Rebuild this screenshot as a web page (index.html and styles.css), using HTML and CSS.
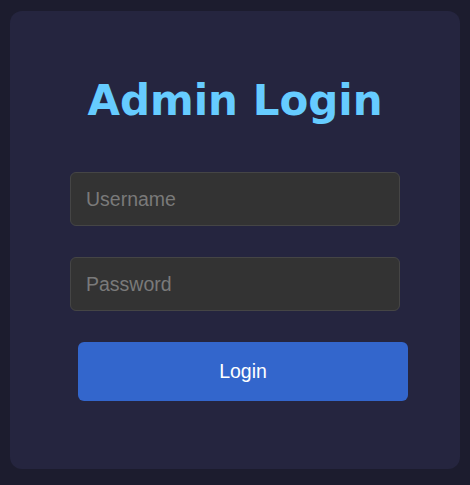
FILE: index.html
```html
<html>
  <head>
    <meta charset="UTF-8">
    <meta name="viewport" content="width=device-width, initial-scale=1">
    <title>Admin Login</title>
    <link rel="stylesheet" href="styles.css">
  </head>

  <body>
    <div class="login-container">
      <h1>Admin Login</h1>
      <form class="login-form" onsubmit="return false">
        <input type="text" placeholder="Username">
        <input type="password" placeholder="Password">
        <button type="submit">Login</button>
      </form>
    </div>
  </body>
</html>
```

FILE: styles.css
```css
body {
  margin: 0;
  padding: 11px 10px 16px;
  background-color: #1c1c2e;
  font-family: "Liberation Sans", Arial, sans-serif;
}

.login-container {
  background-color: #25253f;
  border-radius: 12px;
  padding: 65px 60px 68px;
}

.login-container h1 {
  margin: 0 0 46px;
  text-align: center;
  color: #66ccff;
  font-family: "DejaVu Sans", sans-serif;
  font-weight: bold;
  font-size: 42px;
  line-height: 50px;
}

.login-form {
  display: flex;
  flex-direction: column;
  margin: 0;
}

.login-form input {
  height: 54px;
  margin-bottom: 31px;
  padding: 0 15px;
  box-sizing: border-box;
  background-color: #333333;
  border: 1px solid #454545;
  border-radius: 6px;
  color: white;
  font-family: "Liberation Sans", Arial, sans-serif;
  font-size: 19.5px;
  outline: none;
}

.login-form input::placeholder {
  color: #7a7a7a;
}

.login-form button {
  height: 59px;
  margin: 0 -8px 0 8px;
  background-color: #3366cc;
  border: none;
  border-radius: 6px;
  color: white;
  font-family: "Liberation Sans", Arial, sans-serif;
  font-size: 19.5px;
  cursor: pointer;
}
```
